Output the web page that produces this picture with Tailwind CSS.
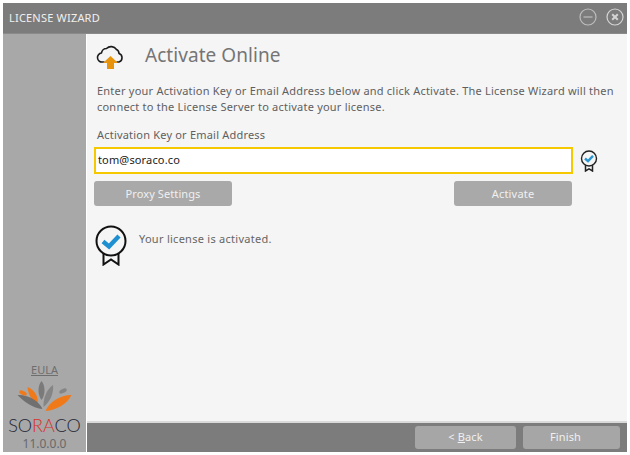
<!DOCTYPE html>
<html>
<head>
<meta charset="utf-8">
<script src="https://cdn.jsdelivr.net/npm/@tailwindcss/browser@4"></script>
</head>
<body class="m-0 bg-white">
<div class="w-[630px] h-[455px] pt-[3px] pl-[3px] pr-[3px] pb-[3px] font-['Noto_Sans','Open_Sans',sans-serif] overflow-hidden">
  <div class="w-[624px] h-[449px] flex flex-col bg-[#f5f5f5]">
    <!-- title bar -->
    <div class="h-[31px] shrink-0 bg-[#7c7c7c] flex items-center pl-[6px] pr-[3px] border-b border-[#8a8a8a]">
      <span class="text-[11px] tracking-[0.2px] text-[#f0f0f0]">LICENSE WIZARD</span>
      <div class="ml-auto flex items-center gap-[9px] pb-[2px]">
        <svg width="18" height="18" viewBox="0 0 18 18" fill="none" stroke="#bdbdbd" stroke-width="1.2"><circle cx="9" cy="9" r="8"/><path d="M4.5 9h9"/></svg>
        <svg width="18" height="18" viewBox="0 0 18 18" fill="none" stroke="#d4d4d4" stroke-width="1.2"><circle cx="9" cy="9" r="8"/><path d="M6.2 6.2l5.6 5.6M11.8 6.2l-5.6 5.6" stroke-width="2"/></svg>
      </div>
    </div>
    <div class="flex-1 flex min-h-0">
      <!-- sidebar -->
      <div class="w-[83px] shrink-0 bg-[#a8a8a8] flex flex-col items-center justify-end">
        <span class="text-[11px] leading-[14px] underline text-[#6e6e6e] mb-[3px]">EULA</span>
        <svg width="60" height="34" viewBox="0 0 60 34">
          <path d="M26.5 1C23 5 22 14 26.5 20C31 14 30 5 26.5 1Z" fill="#7a7a7a"/>
          <path d="M12.5 7C13 14 17 21 22.5 25C24 17 20 10 12.5 7Z" fill="#f07a1a"/>
          <path d="M38 5C31 10 28 19 28.5 27C35 22 39 13 38 5Z" fill="#858585"/>
          <path d="M2.5 15C9 22 18 28 27.5 29C24 21 13 14 2.5 15Z" fill="#707070"/>
          <path d="M56.5 15C45 15 34 22 30.5 31C42 30 52 24 56.5 15Z" fill="#f07a1a"/>
          <ellipse cx="0" cy="0" rx="4" ry="2" transform="translate(8 13) rotate(25)" fill="#f07a1a"/>
          <ellipse cx="0" cy="0" rx="4" ry="2" transform="translate(48 11) rotate(-25)" fill="#858585"/>
        </svg>
        <div class="text-[18px] leading-[22px] font-light font-['Lato',sans-serif] text-[#1f2635]">SO<span class="text-[#d8322a]">RA</span>CO</div>
        <span class="text-[12px] leading-[16px] text-[#696969]">11.0.0.0</span>
      </div>
      <!-- main -->
      <div class="flex-1 flex flex-col min-w-0 border-l border-white">
        <div class="flex-1 pl-[7px] pt-[7px] flex flex-col">
          <div class="flex items-center h-[28px]">
            <svg width="30" height="28" viewBox="0 0 30 28" class="ml-[2px]">
              <path d="M8 21H6.5A4.5 4.5 0 0 1 5.5 12 5 5 0 0 1 10.5 7.5 6.5 6.5 0 0 1 20.5 8.5 4.5 4.5 0 0 1 23 12.5 4.5 4.5 0 0 1 23 21H21" fill="none" stroke="#1c1c1c" stroke-width="1.6" stroke-linejoin="round" stroke-linecap="round"/>
              <path d="M14.5 15L22 22H18V28H11V22H7Z" fill="#e8930c"/>
            </svg>
            <span class="ml-[19px] text-[19px] leading-[28px] tracking-[0.05px] text-[#757575]">Activate Online</span>
          </div>
          <p class="mt-[14px] ml-[3px] w-[530px] text-[11px] leading-[15.5px] tracking-[0.22px] text-[#5f5f5f] whitespace-nowrap">Enter your Activation Key or Email Address below and click Activate. The License Wizard will then<br>connect to the License Server to activate your license.</p>
          <div class="mt-[13px] ml-[3px] text-[11px] leading-[15px] tracking-[0.2px] text-[#5f5f5f]">Activation Key or Email Address</div>
          <div class="mt-[5px] flex items-center">
            <div class="w-[479px] h-[27px] bg-white border-2 border-[#f5c800] flex items-center pl-[2px] pb-[1px] text-[11px] tracking-[0.15px] text-[#222]">tom@soraco.co</div>
            <svg width="18" height="22" viewBox="0 0 18 22" class="ml-[7px] mt-[1px]">
              <path d="M5.5 14v7l3.5-2.2 3.5 2.2v-7" fill="none" stroke="#222" stroke-width="1.5"/>
              <circle cx="9" cy="8.5" r="7.5" fill="#f5f5f5" stroke="#222" stroke-width="1.4"/>
              <path d="M5 8.5l3 2.6 5-5.2" fill="none" stroke="#2b95d0" stroke-width="2.4"/>
            </svg>
          </div>
          <div class="mt-[7px] flex w-[478px] justify-between">
            <button class="w-[138px] h-[25px] pt-[1px] rounded-[3px] bg-[#a9a9a9] text-[11px] tracking-[0.1px] text-[#f0f0f0]">Proxy Settings</button>
            <button class="w-[118px] h-[25px] pt-[1px] rounded-[3px] bg-[#a9a9a9] text-[11px] tracking-[0.2px] text-[#f0f0f0]">Activate</button>
          </div>
          <div class="mt-[19px] ml-[1px] flex items-start">
            <svg width="32" height="41" viewBox="0 0 32 41">
              <path d="M8.5 27v12.5l7.5-5 7.5 5V27" fill="none" stroke="#111" stroke-width="2"/>
              <circle cx="16" cy="16" r="14.5" fill="#f5f5f5" stroke="#111" stroke-width="2"/>
              <path d="M8 16.5l6 5 10-10.5" fill="none" stroke="#1e8fd0" stroke-width="4.4"/>
            </svg>
            <span class="ml-[12px] mt-[6px] text-[11px] leading-[15px] tracking-[0.27px] text-[#666]">Your license is activated.</span>
          </div>
        </div>
        <!-- footer -->
        <div class="h-[31px] shrink-0 bg-[#7c7c7c] border-t-2 border-[#d9d9d9] flex items-center justify-end gap-[7px] pr-[7px]">
          <button class="w-[101px] h-[23px] rounded-[3px] bg-[#a6a6a6] text-[11px] tracking-[0.15px] text-[#f0f0f0]">&lt; <span class="underline">B</span>ack</button>
          <button class="w-[97px] h-[23px] pr-[12px] rounded-[3px] bg-[#a6a6a6] text-[11px] tracking-[0.15px] text-[#f0f0f0]">Finish</button>
        </div>
      </div>
    </div>
  </div>
</div>
</body>
</html>
